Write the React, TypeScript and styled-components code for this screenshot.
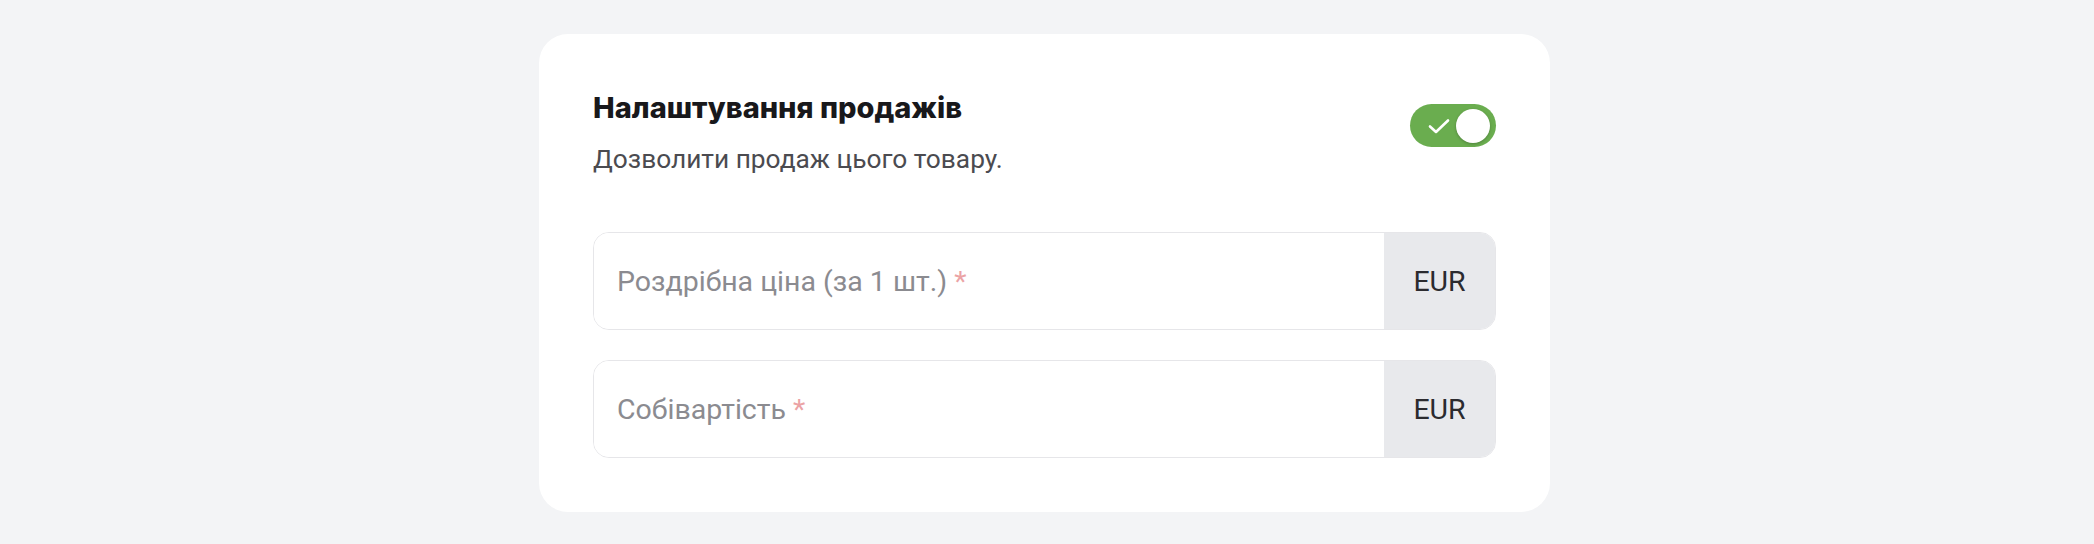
import React from "react";
import styled, { createGlobalStyle } from "styled-components";

const Global = createGlobalStyle`
  html, body { margin: 0; padding: 0; background: #f3f4f6; }
  body { font-family: Roboto, "Noto Sans", sans-serif; }
  * { box-sizing: border-box; }
`;

const Page = styled.div`
  width: 2094px;
  height: 544px;
  padding: 34px 0 0 539px;
`;

const Card = styled.section`
  width: 1011px;
  background: #ffffff;
  border-radius: 29px;
  padding: 54px;
  display: flex;
  flex-direction: column;
`;

const HeaderRow = styled.div`
  display: flex;
  justify-content: space-between;
  align-items: flex-start;
`;

const HeaderText = styled.div`
  display: flex;
  flex-direction: column;
  padding-top: 2px;
`;

const Title = styled.h2`
  margin: 0;
  font-family: Inter, "Noto Sans", sans-serif;
  font-weight: 800;
  font-size: 29px;
  line-height: 36px;
  color: #18181b;
`;

const Subtitle = styled.p`
  margin: 17px 0 0;
  font-family: Roboto, sans-serif;
  font-size: 26.3px;
  line-height: 32px;
  color: #4b4b50;
`;

const Toggle = styled.button<{ $on: boolean }>`
  margin-top: 16px;
  width: 86px;
  height: 43px;
  border: none;
  border-radius: 22px;
  background: ${(p) => (p.$on ? "#6aad4f" : "#d4d4d8")};
  padding: 0 6px 0 18px;
  display: flex;
  align-items: center;
  justify-content: space-between;
  cursor: pointer;
`;

const Knob = styled.span`
  width: 34px;
  height: 34px;
  border-radius: 50%;
  background: #ffffff;
  box-shadow: 0 1px 3px rgba(0, 0, 0, 0.25);
`;

const Fields = styled.div`
  margin-top: 57px;
  display: flex;
  flex-direction: column;
  gap: 30px;
`;

const Field = styled.div`
  display: flex;
  height: 98px;
  border: 1px solid #e6e6e9;
  border-radius: 16px;
  overflow: hidden;
`;

const InputArea = styled.div`
  flex: 1;
  display: flex;
  align-items: center;
  padding-left: 23px;
  font-family: Roboto, sans-serif;
  font-size: 28.5px;
  color: #8b8b90;
  background: #ffffff;
`;

const Required = styled.span`
  color: #eba3a5;
  margin-left: 7px;
`;

const Addon = styled.div`
  width: 111px;
  display: flex;
  align-items: center;
  justify-content: center;
  background: #e8e9ec;
  font-family: Roboto, sans-serif;
  font-size: 28.5px;
  color: #2b2b2f;
`;

const CheckIcon = () => (
  <svg width="22" height="16" viewBox="0 0 22 16" fill="none">
    <path
      d="M2 8.5 L8 14 L20 2.5"
      stroke="#ffffff"
      strokeWidth="2.6"
      strokeLinecap="round"
      strokeLinejoin="round"
    />
  </svg>
);

const fields = [
  { label: "Роздрібна ціна (за 1 шт.)", currency: "EUR" },
  { label: "Собівартість", currency: "EUR" },
];

export default function App() {
  return (
    <>
      <Global />
      <Page>
        <Card>
          <HeaderRow>
            <HeaderText>
              <Title>Налаштування продажів</Title>
              <Subtitle>Дозволити продаж цього товару.</Subtitle>
            </HeaderText>
            <Toggle $on={true} aria-label="toggle">
              <CheckIcon />
              <Knob />
            </Toggle>
          </HeaderRow>
          <Fields>
            {fields.map((f) => (
              <Field key={f.label}>
                <InputArea>
                  {f.label}
                  <Required>*</Required>
                </InputArea>
                <Addon>{f.currency}</Addon>
              </Field>
            ))}
          </Fields>
        </Card>
      </Page>
    </>
  );
}
